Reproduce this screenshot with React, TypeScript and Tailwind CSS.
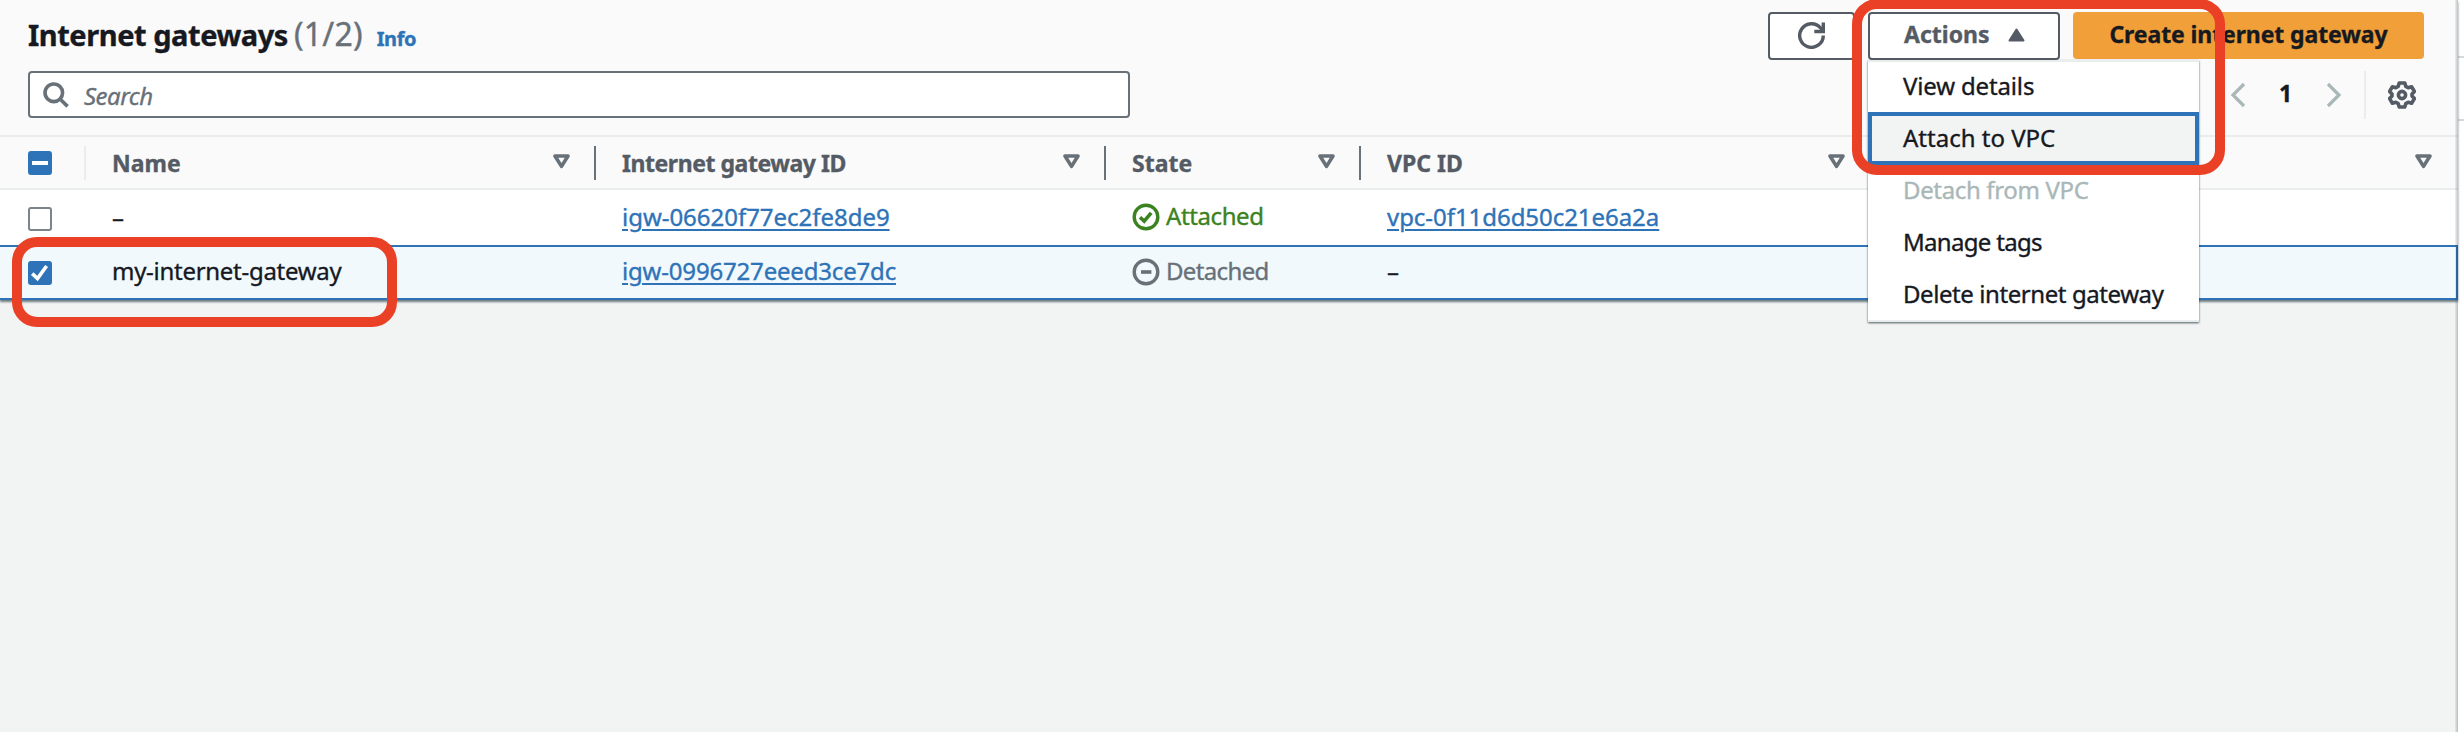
import type { ReactNode } from "react";

function SortIcon() {
  return (
    <svg width="17" height="15" viewBox="0 0 17 15" className="shrink-0 -translate-y-px" fill="none">
      <path d="M2 2h13L8.5 12.4z" stroke="#687078" strokeWidth="3.6" strokeLinejoin="round" />
    </svg>
  );
}

function Checkbox({ state }: { state: "on" | "off" | "mixed" }) {
  if (state === "off") {
    return <span className="block size-6 rounded-[3px] border-2 border-[#7b838b] bg-white" />;
  }
  return (
    <span className="block size-6 rounded-[3px] bg-[#2e73b8]">
      <svg viewBox="0 0 24 24" className="size-6" fill="none" stroke="#fff">
        {state === "mixed" ? <path d="M4 12h16" strokeWidth="4" /> : <path d="M4.2 12.6l5.3 5L18.6 5" strokeWidth="3.6" />}
      </svg>
    </span>
  );
}

function StatusIcon({ attached }: { attached: boolean }) {
  return (
    <svg width="28" height="28" viewBox="0 0 28 28" className="shrink-0" fill="none" stroke="currentColor">
      <circle cx="14" cy="14" r="11.8" strokeWidth="3.4" />
      {attached ? <path d="M8 14.2l4.2 3.9L19.2 9.8" strokeWidth="3.6" /> : <path d="M9 14h10.4" strokeWidth="3.6" />}
    </svg>
  );
}

function HeadCell({ children, width, divider = true }: { children?: ReactNode; width: string; divider?: boolean }) {
  return (
    <div className={`flex h-[34px] shrink-0 items-center justify-between pl-[26px] ${width} ${divider ? "border-r-2 border-[#687078] pr-6" : "pr-[26px]"}`}>
      <span className="translate-y-px text-[23px] font-bold text-[#545b64]">{children}</span>
      <SortIcon />
    </div>
  );
}

const link = "text-[#2e73b8] underline decoration-2 underline-offset-[3px]";

export default function App() {
  return (
    <div className="relative flex h-[732px] w-[2464px] overflow-hidden bg-white font-['Noto_Sans',sans-serif] text-2xl whitespace-nowrap text-[#16191f] [-webkit-text-stroke:0.35px]">
      <main className="relative w-[2458px] shrink-0 bg-[#f2f3f3]">
        <section className="relative h-[300px] shadow-[0_2px_2px_rgba(0,28,36,0.55)]">
          <header className="flex h-[137px] flex-col border-b-2 border-[#eaeded] bg-[#fafafa] pr-[34px] pl-7">
            <div className="flex h-[71px] items-start pt-3">
              <h1 className="flex h-11 flex-1 items-baseline leading-[44px]">
                <span className="text-[29px] font-bold tracking-[-0.45px]">Internet gateways</span>
                <span className="ml-[6px] text-[32px] tracking-[0.2px] text-[#687078]">(1/2)</span>
                <span className="ml-[14px] text-xl font-bold tracking-[-0.4px] text-[#2e73b8]">Info</span>
              </h1>
              <div className="flex gap-[13px]">
                <button className="flex h-12 w-[87px] items-center justify-center rounded-[4px] border-2 border-[#545b64] bg-white">
                  <svg width="28" height="28" viewBox="0 0 28 28" fill="none" stroke="#545b64" strokeWidth="3.4" className="-translate-y-px">
                    <path d="M25.3 14.5A11.8 11.8 0 1 1 22.6 7l2.4 3" />
                    <path d="M25.3 1.5v9h-9" />
                  </svg>
                </button>
                <button className="flex h-12 w-48 items-center rounded-[4px] border-2 border-[#545b64] bg-white pb-[3px] pl-[34px] text-[23px] font-bold text-[#545b64]">
                  <span className="w-[104px] text-left">Actions</span>
                  <svg width="17" height="14" viewBox="0 0 17 14">
                    <path d="M8.5 1.5L15.5 12.5h-14z" fill="#545b64" stroke="#545b64" strokeWidth="2" strokeLinejoin="round" />
                  </svg>
                </button>
                <button className="flex h-[47px] w-[351px] items-center justify-center rounded-[4px] bg-[#f19f38] pb-[3px] text-[23px] font-bold tracking-[-0.1px]">
                  Create internet gateway
                </button>
              </div>
            </div>
            <div className="flex h-[47px] items-center justify-between">
              <div className="flex h-[47px] w-[1102px] items-center rounded-[4px] border-2 border-[#687078] bg-white pl-[13px]">
                <svg width="26" height="26" viewBox="0 0 26 26" fill="none" stroke="#687078" strokeWidth="3.6">
                  <circle cx="10.8" cy="10.8" r="8.8" />
                  <path d="M17 17l7.6 7.4" />
                </svg>
                <span className="ml-[15px] translate-y-px text-2xl tracking-[-0.5px] text-[#687078] italic">Search</span>
              </div>
              <div className="flex h-full items-center">
                <svg width="16" height="26" viewBox="0 0 16 26" fill="none" stroke="#aab7b8" strokeWidth="3.2">
                  <path d="M14 2L3 13l11 11" />
                </svg>
                <span className="w-[80px] pr-[1px] pb-[3px] text-center text-[23px] font-bold">1</span>
                <svg width="16" height="26" viewBox="0 0 16 26" fill="none" stroke="#aab7b8" strokeWidth="3.2">
                  <path d="M2 2l11 11L2 24" />
                </svg>
                <span className="ml-[22px] h-12 w-[2px] bg-[#eaeded]" />
                <svg width="28" height="28" viewBox="0 0 28 28" fill="none" stroke="#545b64" strokeWidth="3.6" strokeLinejoin="round" className="mr-[8px] ml-[22px]">
                  <path d="M11.2 2h5.6l1 3.4 2.4 1.4 3.4-1 2.8 4.6-2.4 2.5v2.2l2.4 2.5-2.8 4.6-3.4-1-2.4 1.4-1 3.4h-5.6l-1-3.4-2.4-1.4-3.4 1-2.8-4.6L4 15.1v-2.2L1.6 10.4l2.8-4.6 3.4 1 2.4-1.4z" />
                  <circle cx="14" cy="14" r="3.6" />
                </svg>
              </div>
            </div>
          </header>

          <div className="flex h-[53px] items-center border-b-2 border-[#eaeded] bg-[#fafafa]">
            <div className="flex h-[34px] w-[86px] items-center border-r-2 border-[#eaeded] pl-7">
              <Checkbox state="mixed" />
            </div>
            <HeadCell width="w-[510px]">Name</HeadCell>
            <HeadCell width="w-[510px]"><span className="tracking-[-0.45px]">Internet gateway ID</span></HeadCell>
            <HeadCell width="w-[255px]">State</HeadCell>
            <HeadCell width="w-[510px]">VPC ID</HeadCell>
            <HeadCell width="w-[587px]" divider={false} />
          </div>

          <div className="flex h-[55px] items-center bg-white">
            <div className="w-[112px] pt-[2px] pl-7"><Checkbox state="off" /></div>
            <div className="w-[510px] pb-[2px]">–</div>
            <div className="w-[510px] pb-[2px]"><a className={`${link} tracking-[-0.03px]`}>igw-06620f77ec2fe8de9</a></div>
            <div className="flex w-[255px] items-center gap-[6px] pb-px text-[#3b8220]">
              <StatusIcon attached /><span className="-translate-y-px tracking-[-0.4px]">Attached</span>
            </div>
            <div className="pb-[2px]"><a className={`${link} tracking-[-0.05px]`}>vpc-0f11d6d50c21e6a2a</a></div>
          </div>

          <div className="flex h-[55px] items-center border-y-2 border-r-2 border-[#2e73b8] bg-[#f1f9fd] pb-[2px]">
            <div className="w-[112px] pt-[2px] pl-7"><Checkbox state="on" /></div>
            <div className="w-[510px] pb-[2px] tracking-[-0.28px]">my-internet-gateway</div>
            <div className="w-[510px] pb-[2px]"><a className={`${link} tracking-[-0.18px]`}>igw-0996727eeed3ce7dc</a></div>
            <div className="flex w-[255px] items-center gap-[6px] text-[#687078]">
              <StatusIcon attached={false} /><span className="-translate-y-px tracking-[-0.65px]">Detached</span>
            </div>
            <div className="pb-[2px]">–</div>
          </div>
        </section>
        <div className="absolute inset-y-0 right-0 w-[3px] bg-linear-to-r from-[#001c24]/5 to-[#001c24]/25" />
      </main>

      <aside className="flex flex-1 flex-col pt-14">
        <div className="h-[65px] border-y-2 border-[#d5dbdb]" />
      </aside>

      <ul className="absolute top-[60px] left-[1868px] w-[331px] border-b-2 border-[#eaeded] bg-white shadow-[0_1px_2px_rgba(0,28,36,0.7)]">
        <li className="flex h-[52px] items-center border-t-2 border-[#eaeded] pb-[3px] pl-[35px] tracking-[-0.15px]">View details</li>
        <li className="flex h-[53px] items-center border-4 border-[#2e73b8] bg-[#f2f3f3] pb-px pl-[31px]">Attach to VPC</li>
        <li className="flex h-[51px] items-center pb-[2px] pl-[35px] tracking-[-0.35px] text-[#aab7b8]">Detach from VPC</li>
        <li className="flex h-[52px] items-center pl-[35px] tracking-[-0.7px]">Manage tags</li>
        <li className="flex h-[52px] items-center pl-[35px] tracking-[-0.42px]">Delete internet gateway</li>
      </ul>

      <div className="absolute top-[237px] left-[12px] h-[90px] w-[385px] rounded-[25px] border-10 border-[#ea4025]" />
      <div className="absolute top-[-1px] left-[1852px] h-[176px] w-[373px] rounded-[25px] border-10 border-[#ea4025]" />
    </div>
  );
}
